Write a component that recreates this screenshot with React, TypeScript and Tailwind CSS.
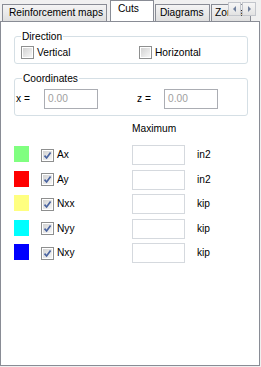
import React from 'react';

type CheckProps = { checked?: boolean; className?: string };

function CheckBox({ checked, className = '' }: CheckProps) {
  return (
    <span className={`block flex-none w-[13px] h-[13px] border border-[#8e8f8f] bg-white p-px ${className}`}>
      <span className="block w-full h-full bg-linear-to-br from-[#d2d2d2] to-[#f7f7f7]">
        {checked && (
          <svg width="9" height="9" viewBox="0 0 9 9" className="block">
            <path d="M1.5 4.6 L3.6 7 L7.6 1.4" fill="none" stroke="#4a64a0" strokeWidth="1.7" />
          </svg>
        )}
      </span>
    </span>
  );
}

const rows = [
  { color: 'bg-[#80ff80]', label: 'Ax', unit: 'in2' },
  { color: 'bg-[#ff0000]', label: 'Ay', unit: 'in2' },
  { color: 'bg-[#ffff80]', label: 'Nxx', unit: 'kip' },
  { color: 'bg-[#00ffff]', label: 'Nyy', unit: 'kip' },
  { color: 'bg-[#0000ff]', label: 'Nxy', unit: 'kip' },
];

export default function App(): React.JSX.Element {
  return (
    <div className="w-[261px] h-[367px] bg-[#f0f0f0] font-['Liberation_Sans',Arial,sans-serif] text-[10.2px] text-black overflow-hidden">
      {/* tab strip */}
      <div className="relative h-[21px] flex items-end overflow-hidden z-10">
        <div className="ml-[2px] w-[105px] h-[17px] border border-b-0 border-[#898c95] bg-linear-to-b from-[#f4f4f4] to-[#dfdfdf] pl-[6px] leading-[16px]">
          Reinforcement maps
        </div>
        <div className="ml-[3px] w-[44px] h-[22px] -mb-px border border-b-0 border-[#898c95] bg-white pl-[7px] pt-[2px] leading-[12px]">
          Cuts
        </div>
        <div className="ml-[1px] w-[55px] h-[17px] border border-b-0 border-[#898c95] bg-linear-to-b from-[#f4f4f4] to-[#dfdfdf] pl-[4px] leading-[16px]">
          Diagrams
        </div>
        <div className="ml-[1px] w-[40px] h-[17px] border border-b-0 border-[#898c95] bg-linear-to-b from-[#f4f4f4] to-[#dfdfdf] pl-[3px] leading-[16px] whitespace-nowrap">
          Zones
        </div>
        <div className="absolute left-[228px] top-[2px] flex gap-px">
          <div className="w-[13px] h-[14px] border border-[#c3c6cc] bg-linear-to-b from-[#f6f6f6] to-[#e3e3e3] flex items-center justify-center">
            <svg width="4" height="6" viewBox="0 0 4 6">
              <path d="M3 0 L0 3 L3 6 Z" fill="#6f7f9c" />
            </svg>
          </div>
          <div className="w-[14px] h-[14px] border border-[#c3c6cc] bg-linear-to-b from-[#f6f6f6] to-[#e3e3e3] flex items-center justify-center">
            <svg width="4" height="6" viewBox="0 0 4 6">
              <path d="M1 0 L4 3 L1 6 Z" fill="#6f7f9c" />
            </svg>
          </div>
        </div>
      </div>

      {/* panel */}
      <div className="w-[260px] h-[345px] border border-[#898c95] bg-white">
        <fieldset className="ml-[13px] mt-[8px] w-[234px] border border-[#d5dfe5] rounded-[3px] pb-[4px]">
          <legend className="ml-[6px] px-px leading-[13px]">Direction</legend>
          <div className="mt-[3px] h-[13px] flex items-center">
            <CheckBox className="ml-[6px]" />
            <span className="ml-[3px] w-[102px]">Vertical</span>
            <CheckBox />
            <span className="ml-[3px]">Horizontal</span>
          </div>
        </fieldset>

        <fieldset className="ml-[13px] mt-[8px] w-[234px] border border-[#d5dfe5] rounded-[3px] pb-[6px]">
          <legend className="ml-[7px] px-px leading-[13px]">Coordinates</legend>
          <div className="mt-[4px] h-[20px] flex items-center">
            <span className="ml-px w-[28px]">x =</span>
            <div className="w-[54px] h-[20px] border border-[#abadb3] pl-[3px] leading-[18px] text-[#a0a0a0]">0.00</div>
            <span className="ml-[39px] w-[27px]">z =</span>
            <div className="w-[54px] h-[20px] border border-[#abadb3] pl-[3px] leading-[18px] text-[#a0a0a0]">0.00</div>
          </div>
        </fieldset>

        <div className="mt-[6px] pl-[131px] leading-[13px]">Maximum</div>

        <div className="mt-[10px] flex flex-col gap-[4.5px]">
          {rows.map((r) => (
            <div key={r.label} className="h-[20px] flex items-center">
              <span className={`ml-[13px] w-[15px] h-[16px] -mt-[2px] ${r.color}`} />
              <CheckBox checked className="ml-[12px]" />
              <span className="ml-[3px] w-[75px]">{r.label}</span>
              <div className="w-[53px] h-[20px] border border-[#d5d9de]" />
              <span className="ml-[12px]">{r.unit}</span>
            </div>
          ))}
        </div>
      </div>
    </div>
  );
}
